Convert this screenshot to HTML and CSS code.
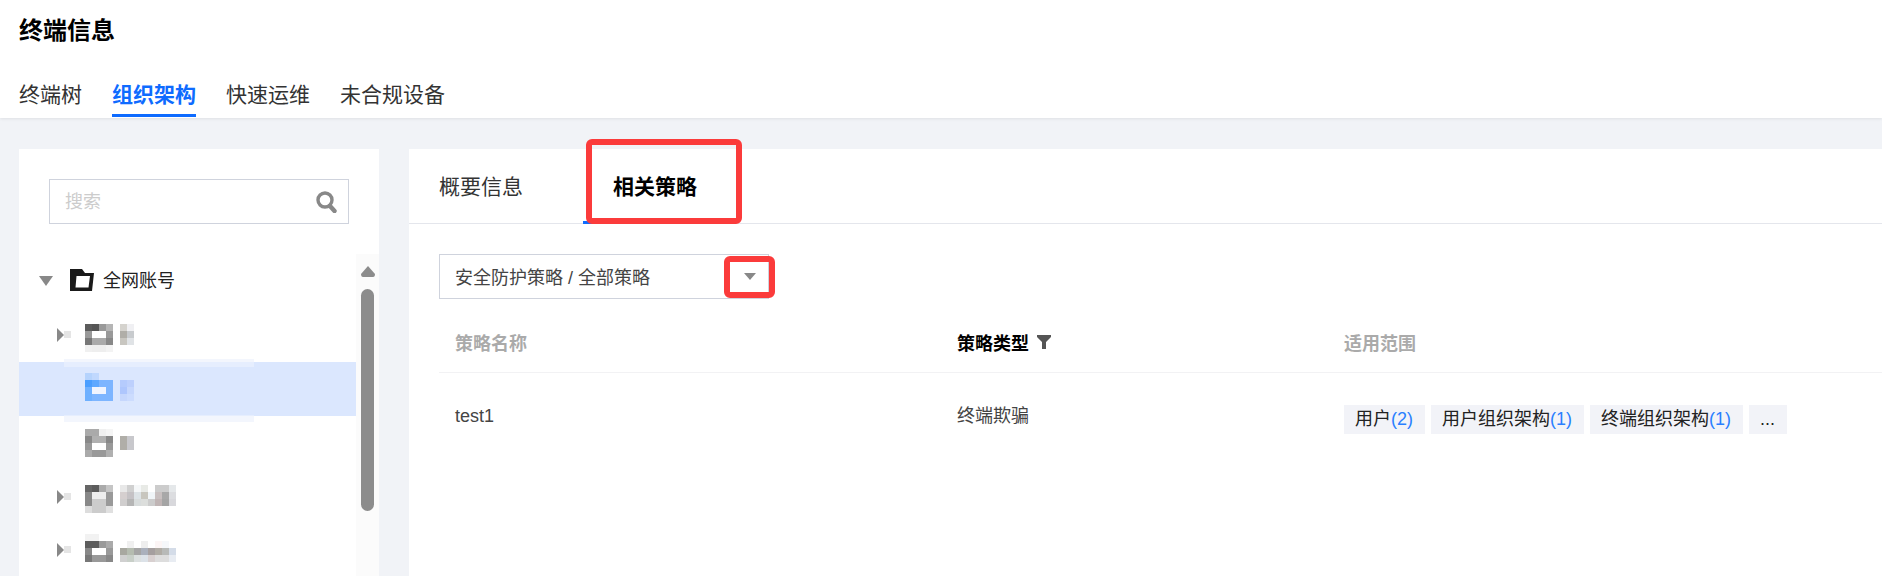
FILE: index.html
```html
<!DOCTYPE html>
<html lang="zh-CN">
<head>
    <meta charset="UTF-8">
    <title>终端信息</title>
    <link rel="stylesheet" href="styles.css">
</head>
<body>

<header class="page-header">
    <h1 class="page-title">终端信息</h1>
    <nav class="page-tabs">
        <a href="#">终端树</a>
        <a href="#" class="active">组织架构</a>
        <a href="#">快速运维</a>
        <a href="#">未合规设备</a>
    </nav>
</header>

<main class="content">
    <aside class="tree-panel">
        <div class="search-box">
            <span class="search-text">搜索</span>
            <svg class="search-icon" width="21" height="22" viewBox="0 0 21 22">
                <circle cx="9" cy="9" r="7" fill="none" stroke="#888" stroke-width="3.4"/>
                <path d="M14 15 L18.5 20" stroke="#888" stroke-width="4.4" stroke-linecap="round"/>
            </svg>
        </div>
        <div class="tree-wrap">
            <ul class="tree">
                <li class="tree-root">
                    <svg class="root-arrow" width="14" height="10" viewBox="0 0 14 10"><path d="M0 0 H14 L7 10 Z" fill="#888"/></svg>
                    <svg class="root-folder" width="24" height="22" viewBox="0 0 24 22">
                        <path fill="#1a1a1a" fill-rule="evenodd" d="M0 0 H12 L15 4 H24 L22 22 H0 Z M6.5 7 L5.5 18.5 H18.5 L20 7 Z"/>
                    </svg>
                    <span class="root-label">全网账号</span>
                </li>
                <li class="tree-row">
                    <svg class="mosaic" width="120" height="54">
                        <path d="M0 20 L7 27 L0 34 Z" fill="#888"/>
                        <rect x="7" y="23" fill="#e5e5e5"/>
                        <rect x="28" y="16" fill="#5c5c5c"/><rect x="35" y="16" fill="#555"/><rect x="42" y="16" fill="#999"/><rect x="49" y="16" fill="#b5b5b5"/>
                        <rect x="28" y="23" fill="#999"/><rect x="49" y="23" fill="#999"/>
                        <rect x="28" y="30" fill="#777"/><rect x="35" y="30" fill="#aaa"/><rect x="42" y="30" fill="#aaa"/><rect x="49" y="30" fill="#888"/>
                        <rect x="28" y="37" fill="#f0f0f0"/><rect x="35" y="37" fill="#eee"/><rect x="42" y="37" fill="#eee"/><rect x="49" y="37" fill="#f3f3f3"/>
                        <rect x="63" y="16" fill="#d5d3ce"/><rect x="70" y="16" fill="#f0f0f3"/>
                        <rect x="63" y="23" fill="#b0aea8"/><rect x="70" y="23" fill="#c8cbce"/>
                        <rect x="63" y="30" fill="#c8c6c0"/><rect x="70" y="30" fill="#e0e3e6"/>
                    </svg>
                </li>
                <li class="tree-row selected">
                    <svg class="mosaic" width="120" height="54">
                        <rect x="28" y="11" fill="#b5d3fd"/><rect x="35" y="11" fill="#c0d8fe"/>
                        <rect x="28" y="18" fill="#4a9eff"/><rect x="35" y="18" fill="#5ea8ff"/><rect x="42" y="18" fill="#7db5ff"/><rect x="49" y="18" fill="#7db5ff"/>
                        <rect x="28" y="25" fill="#6eb0ff"/><rect x="35" y="25" fill="#f0f4fe"/><rect x="42" y="25" fill="#f0f4fe"/><rect x="49" y="25" fill="#7db5ff"/>
                        <rect x="28" y="32" fill="#6eb0ff"/><rect x="35" y="32" fill="#7db5ff"/><rect x="42" y="32" fill="#7db5ff"/><rect x="49" y="32" fill="#7db5ff"/>
                        <rect x="63" y="18" fill="#b5cbfd"/><rect x="70" y="18" fill="#bdd0fd"/>
                        <rect x="63" y="25" fill="#aec6fd"/><rect x="70" y="25" fill="#c6d7fd"/>
                        <rect x="63" y="32" fill="#c6d7fd"/><rect x="70" y="32" fill="#ccdcfe"/>
                    </svg>
                </li>
                <li class="tree-row">
                    <svg class="mosaic" width="120" height="54">
                        <rect x="28" y="13" fill="#aaa"/><rect x="35" y="13" fill="#aaa"/><rect x="42" y="13" fill="#f0f0f0"/><rect x="49" y="13" fill="#f5f5f5"/>
                        <rect x="28" y="20" fill="#888"/><rect x="35" y="20" fill="#b0b0b0"/><rect x="42" y="20" fill="#b0b0b0"/><rect x="49" y="20" fill="#888"/>
                        <rect x="28" y="27" fill="#999"/><rect x="49" y="27" fill="#999"/>
                        <rect x="28" y="34" fill="#aaa"/><rect x="35" y="34" fill="#999"/><rect x="42" y="34" fill="#999"/><rect x="49" y="34" fill="#b0b0b0"/>
                        <rect x="63" y="20" fill="#b0aea8"/><rect x="70" y="20" fill="#c8c8cc"/>
                        <rect x="63" y="27" fill="#b0aea8"/><rect x="70" y="27" fill="#c8c8cc"/>
                    </svg>
                </li>
                <li class="tree-row">
                    <svg class="mosaic" width="120" height="54">
                        <path d="M0 20 L7 27 L0 34 Z" fill="#888"/>
                        <rect x="7" y="23" fill="#e5e5e5"/>
                        <rect x="28" y="15" fill="#666"/><rect x="35" y="15" fill="#5c5c5c"/><rect x="42" y="15" fill="#aaa"/><rect x="49" y="15" fill="#c5c5c5"/>
                        <rect x="28" y="22" fill="#888"/><rect x="35" y="22" fill="#eee"/><rect x="42" y="22" fill="#eee"/><rect x="49" y="22" fill="#999"/>
                        <rect x="28" y="29" fill="#888"/><rect x="35" y="29" fill="#ccc"/><rect x="42" y="29" fill="#ccc"/><rect x="49" y="29" fill="#999"/>
                        <rect x="28" y="36" fill="#ddd"/><rect x="35" y="36" fill="#ccc"/><rect x="42" y="36" fill="#ccc"/><rect x="49" y="36" fill="#e0e0e0"/>
                        <rect x="63" y="15" fill="#e8e8e8"/><rect x="70" y="15" fill="#d0d0d0"/><rect x="77" y="15" fill="#f5f7f8"/><rect x="84" y="15" fill="#e8eae6"/><rect x="98" y="15" fill="#ccc"/><rect x="105" y="15" fill="#ccc"/><rect x="112" y="15" fill="#e5e8ea"/>
                        <rect x="63" y="22" fill="#d5cfcf"/><rect x="70" y="22" fill="#c5c2c5"/><rect x="77" y="22" fill="#dde3e6"/><rect x="84" y="22" fill="#c8c6be"/><rect x="91" y="22" fill="#f0f5f8"/><rect x="98" y="22" fill="#c8c0c0"/><rect x="105" y="22" fill="#a8a8a8"/><rect x="112" y="22" fill="#dcdde0"/>
                        <rect x="63" y="29" fill="#d0cece"/><rect x="70" y="29" fill="#b5b5b5"/><rect x="77" y="29" fill="#d8dcdc"/><rect x="84" y="29" fill="#dcdedc"/><rect x="91" y="29" fill="#ccc"/><rect x="98" y="29" fill="#c0b5b5"/><rect x="105" y="29" fill="#a5a5a5"/><rect x="112" y="29" fill="#d8d8dc"/>
                    </svg>
                </li>
                <li class="tree-row">
                    <svg class="mosaic" width="120" height="54">
                        <path d="M0 19 L7 26 L0 33 Z" fill="#888"/>
                        <rect x="7" y="22" fill="#e5e5e5"/>
                        <rect x="28" y="10" fill="#f2f2f2"/><rect x="35" y="10" fill="#f2f2f2"/>
                        <rect x="28" y="17" fill="#5c5c5c"/><rect x="35" y="17" fill="#5c5c5c"/><rect x="42" y="17" fill="#999"/><rect x="49" y="17" fill="#aaa"/>
                        <rect x="28" y="24" fill="#888"/><rect x="49" y="24" fill="#999"/>
                        <rect x="28" y="31" fill="#777"/><rect x="35" y="31" fill="#999"/><rect x="42" y="31" fill="#999"/><rect x="49" y="31" fill="#888"/>
                        <rect x="70" y="17" fill="#f0f0f0"/><rect x="84" y="17" fill="#eee"/><rect x="98" y="17" fill="#fcf5f5"/><rect x="105" y="17" fill="#f5f7fa"/>
                        <rect x="63" y="24" fill="#a8a8a0"/><rect x="70" y="24" fill="#b5bcb0"/><rect x="77" y="24" fill="#a5a5a5"/><rect x="84" y="24" fill="#aab0bc"/><rect x="91" y="24" fill="#a59f9f"/><rect x="98" y="24" fill="#b0aca5"/><rect x="105" y="24" fill="#b8bab8"/><rect x="112" y="24" fill="#d4dce8"/>
                        <rect x="63" y="31" fill="#d0d0d0"/><rect x="70" y="31" fill="#c8cfc8"/><rect x="77" y="31" fill="#dce0e0"/><rect x="84" y="31" fill="#dce2e8"/><rect x="91" y="31" fill="#d8d0d0"/><rect x="98" y="31" fill="#ddd"/><rect x="105" y="31" fill="#ddd"/><rect x="112" y="31" fill="#e8ecf2"/>
                    </svg>
                </li>
            </ul>
            <div class="scrollbar">
                <svg class="scroll-up" width="14" height="11" viewBox="0 0 14 11"><path d="M7 0 L14 8 Q14 11 12 11 H2 Q0 11 0 8 Z" fill="#8c8c8c"/></svg>
                <div class="scroll-thumb"></div>
            </div>
        </div>
    </aside>

    <section class="detail-panel">
        <div class="detail-tabs">
            <a href="#" class="detail-tab">概要信息</a>
            <a href="#" class="detail-tab active">相关策略</a>
            <div class="mark mark-tab"></div>
        </div>

        <div class="detail-body">
            <div class="select-box">
                <span class="select-text">安全防护策略 / 全部策略</span>
                <span class="select-arrow"></span>
                <div class="mark mark-arrow"></div>
            </div>

            <div class="policy-table">
                <div class="table-row table-head">
                    <div class="cell">策略名称</div>
                    <div class="cell cell-filter">策略类型
                        <svg width="14" height="14" viewBox="0 0 14 14"><path d="M0 0 H14 V2 L9 7 V14 H5 V7 L0 2 Z" fill="#555"/></svg>
                    </div>
                    <div class="cell">适用范围</div>
                </div>
                <div class="table-row table-data">
                    <div class="cell">test1</div>
                    <div class="cell">终端欺骗</div>
                    <div class="cell tag-list">
                        <span class="tag">用户<em>(2)</em></span>
                        <span class="tag">用户组织架构<em>(1)</em></span>
                        <span class="tag">终端组织架构<em>(1)</em></span>
                        <span class="tag">...</span>
                    </div>
                </div>
            </div>
        </div>
    </section>
</main>

</body>
</html>
```

FILE: styles.css
```css
html, body {
    height: 100%;
}
body {
    font-family: "Liberation Sans", "Noto Sans CJK SC", sans-serif;
    margin: 0;
    background-color: #f1f3f7;
    color: #333;
    display: flex;
    flex-direction: column;
    overflow: hidden;
}
a {
    color: inherit;
    text-decoration: none;
}

/* 页头 */
.page-header {
    background-color: white;
    padding: 15px 19px 1px;
    box-shadow: 0 1px 3px rgba(0, 0, 0, 0.08);
}
.page-title {
    font-size: 24px;
    line-height: 32px;
    font-weight: bold;
    color: #000;
    margin: 0 0 31px;
}
.page-tabs {
    display: flex;
    gap: 30px;
}
.page-tabs a {
    font-size: 21px;
    line-height: 34px;
    padding-bottom: 2px;
    border-bottom: 3px solid transparent;
}
.page-tabs a.active {
    color: #0e6bff;
    font-weight: bold;
    border-bottom-color: #0e6bff;
}

.content {
    flex: 1;
    min-height: 0;
    display: flex;
    gap: 30px;
    padding: 31px 0 0 19px;
}

/* 左侧树 */
.tree-panel {
    width: 360px;
    flex-shrink: 0;
    background-color: white;
    padding-top: 30px;
    overflow: hidden;
}
.search-box {
    width: 300px;
    height: 45px;
    box-sizing: border-box;
    margin: 0 0 30px 30px;
    padding: 0 11px 0 15px;
    border: 1px solid #cfd3dd;
    display: flex;
    align-items: center;
    justify-content: space-between;
}
.search-text {
    font-size: 18px;
    color: #ccc;
    padding-bottom: 4px;
}
.tree-wrap {
    display: flex;
    height: 322px;
}
.tree {
    list-style: none;
    margin: 0;
    padding: 0;
    width: 337px;
}
.tree-root {
    height: 54px;
    padding-left: 20px;
    display: flex;
    align-items: center;
    font-size: 18px;
    color: #222;
}
.root-folder {
    margin: 0 9px 2px 17px;
}
.root-label {
    padding-bottom: 4px;
}
.tree-row {
    height: 54px;
    padding-left: 38px;
    position: relative;
}
.tree-row.selected {
    background-color: #dbe7fe;
}
/* 打码边缘的浅色条 */
.tree-row.selected::before,
.tree-row.selected::after {
    content: "";
    position: absolute;
    left: 45px;
    width: 190px;
}
.tree-row.selected::before {
    top: -3px;
    height: 8px;
    background: linear-gradient(#f3f6fd 3px, #e6eefe 3px);
}
.tree-row.selected::after {
    bottom: -6px;
    height: 7px;
    background: linear-gradient(#e6eefe 1px, #f3f6fd 1px);
}
.mosaic {
    display: block;
    position: relative;
    z-index: 1;
    filter: blur(0.4px);
}
.mosaic rect {
    width: 7px;
    height: 7px;
}
.scrollbar {
    width: 23px;
    background-color: #fbfbfb;
    padding: 12px 0 0 5px;
    box-sizing: border-box;
}
.scroll-up {
    display: block;
}
.scroll-thumb {
    width: 13px;
    height: 222px;
    margin-top: 12px;
    border-radius: 7px;
    background-color: #8c8c8c;
}

/* 右侧详情 */
.detail-panel {
    flex: 1;
    background-color: white;
}
.detail-tabs {
    display: flex;
    height: 74px;
    border-bottom: 1px solid #e4e6ec;
    position: relative;
}
.detail-tab {
    font-size: 21px;
    line-height: 75px;
    padding: 0 30px;
    margin-right: 30px;
    height: 72px;
    border-bottom: 3px solid transparent;
}
.detail-tab.active {
    color: #000;
    font-weight: bold;
    border-bottom-color: #0e6bff;
}
.mark {
    position: absolute;
    box-sizing: border-box;
    border: 6px solid #fb3b3b;
    border-radius: 6px;
}
.mark-tab {
    left: 177px;
    top: -10px;
    width: 156px;
    height: 85px;
}
.detail-body {
    padding-top: 30px;
}
.select-box {
    width: 330px;
    height: 45px;
    box-sizing: border-box;
    margin-left: 30px;
    padding: 0 12px 0 15px;
    border: 1px solid #cfd3dd;
    display: flex;
    align-items: center;
    justify-content: space-between;
    font-size: 18px;
    color: #444;
    position: relative;
}
.select-text {
    padding-bottom: 2px;
}
.select-arrow {
    width: 0;
    height: 0;
    border-left: 6px solid transparent;
    border-right: 6px solid transparent;
    border-top: 7px solid #888;
}
.mark-arrow {
    left: 284px;
    top: 1px;
    width: 51px;
    height: 42px;
}
.policy-table {
    margin-left: 30px;
    font-size: 18px;
}
.table-row {
    display: grid;
    grid-template-columns: 502px 387px 1fr;
    align-items: center;
}
.cell {
    padding-left: 16px;
}
.table-head {
    height: 72px;
    margin-top: 2px;
    padding-top: 10px;
    box-sizing: border-box;
    border-bottom: 1px solid #f2f2f4;
    font-weight: bold;
    color: #aaa;
}
.cell-filter {
    color: #000;
    display: flex;
    align-items: center;
    gap: 8px;
}
.table-data {
    height: 88px;
    align-items: start;
    color: #444;
    line-height: 28px;
}
.table-data .cell {
    padding-top: 29px;
}
.table-data .tag-list {
    padding-top: 32px;
    display: flex;
    gap: 6px;
}
.tag {
    height: 29px;
    line-height: 29px;
    padding: 0 12px 0 11px;
    background-color: #f2f3f8;
    color: #222;
}
.tag em {
    font-style: normal;
    color: #2a7fff;
}
```
